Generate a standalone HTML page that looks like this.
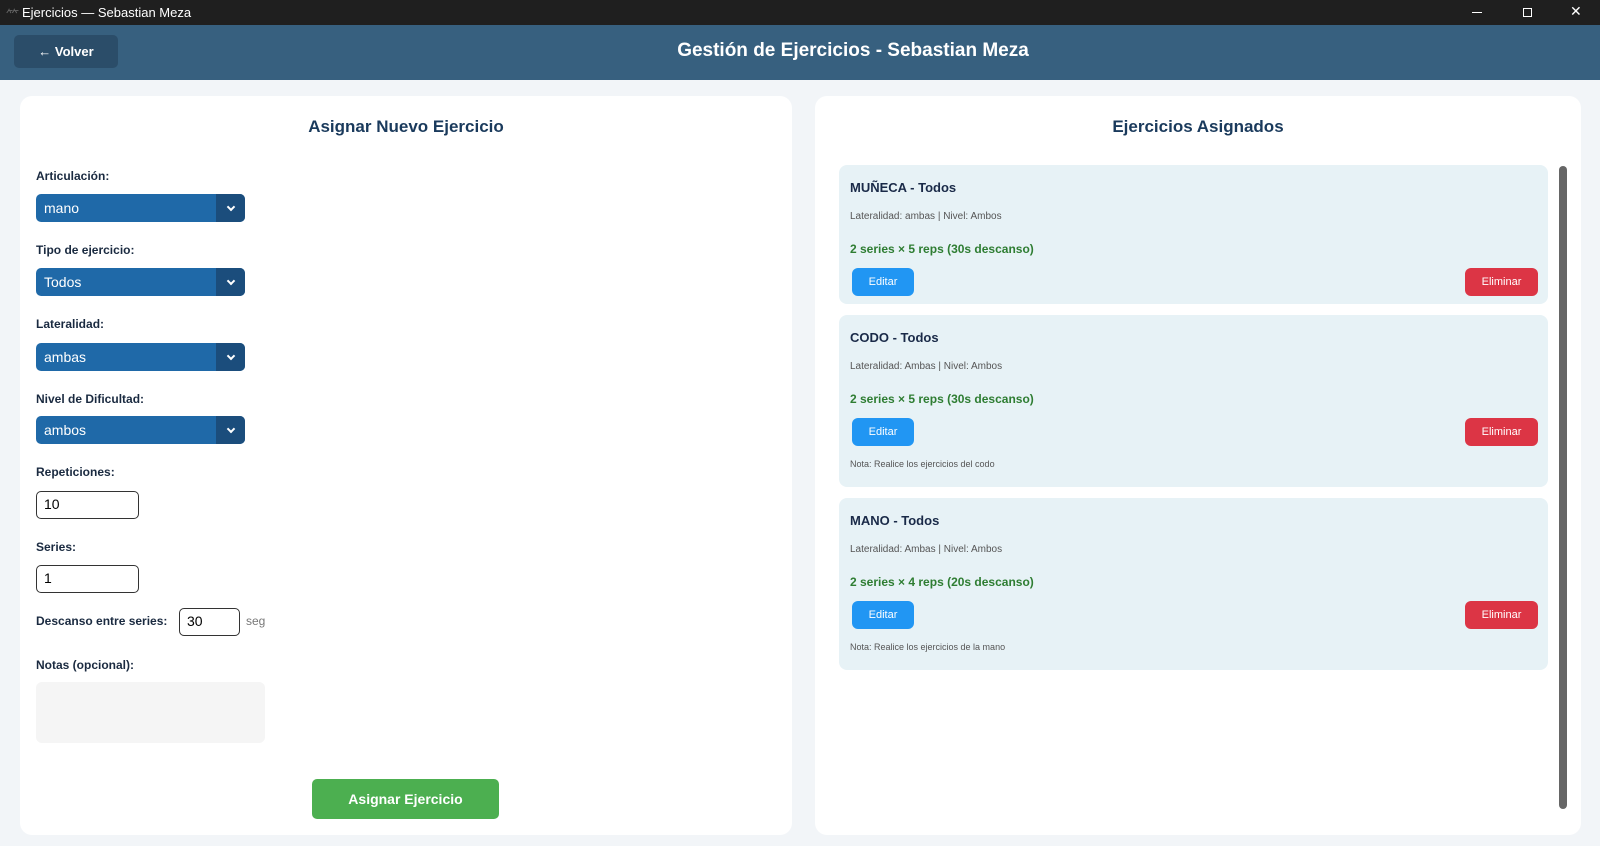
<!DOCTYPE html>
<html><head><meta charset="utf-8"><style>
*{box-sizing:border-box;margin:0;padding:0}
body{width:1600px;height:846px;background:#f2f5f8;font-family:"Liberation Sans",sans-serif;position:relative;overflow:hidden}
.abs{position:absolute}
.tb{left:0;top:0;width:1600px;height:25px;background:#1f1f1f;color:#fff;font-size:13px}
.hd{left:0;top:25px;width:1600px;height:55px;background:#37607f}
.volver{left:14px;top:35px;width:104px;height:33px;background:#2b4d69;border-radius:5px;color:#fff;font-weight:bold;font-size:13px;text-align:center;line-height:33px}
.ht{left:0;width:1706px;top:40px;text-align:center;color:#fff;font-weight:bold;font-size:19px}
.panel{background:#fff;border-radius:12px;top:96px;height:739px}
h2{position:absolute;font-size:17px;color:#1a3a5c;font-weight:bold;text-align:center;top:21px;width:100%}
.lbl{position:absolute;left:16px;font-size:12px;font-weight:bold;color:#1a2a40}
.sel{position:absolute;left:16px;width:209px;height:28px;background:#1f69a8;border-radius:5px;color:#fff;font-size:14px;line-height:28px;padding-left:8px;overflow:hidden}
.sel:after{content:"";position:absolute;right:0;top:0;width:29px;height:28px;background:#1b4d7c}
.sel i{position:absolute;right:11px;top:10px;width:6px;height:6px;border-right:2px solid #fff;border-bottom:2px solid #fff;transform:rotate(45deg);z-index:2}
.inp{position:absolute;border:1.5px solid #333;border-radius:5px;background:#fff;font-size:14px;line-height:25px;padding-left:7px;height:28px}
.card{position:absolute;left:24px;width:709px;background:#e7f2f6;border-radius:8px}
.ct{position:absolute;left:11px;top:15px;font-size:13px;font-weight:bold;color:#1a2a48}
.cl{position:absolute;left:11px;top:46px;font-size:10px;color:#555}
.cg{position:absolute;left:11px;top:77px;font-size:12px;font-weight:bold;color:#2e7d32}
.be{position:absolute;left:13px;top:103px;width:62px;height:28px;background:#2196f3;border-radius:6px;color:#fff;font-size:11px;text-align:center;line-height:28px}
.bx{position:absolute;right:10px;top:103px;width:73px;height:28px;background:#dc3545;border-radius:6px;color:#fff;font-size:11px;text-align:center;line-height:28px}
.cn{position:absolute;left:11px;top:144px;font-size:9px;color:#555}
</style></head><body>
<div class="abs tb"><span style="position:absolute;left:6px;top:5px;color:#666">⺮</span><span style="position:absolute;left:22px;top:5px">Ejercicios — Sebastian Meza</span>
<div style="position:absolute;left:1472px;top:12px;width:10px;height:1px;background:#fff"></div>
<div style="position:absolute;left:1523px;top:8px;width:9px;height:9px;border:1px solid #fff"></div>
<span style="position:absolute;left:1570px;top:3px;font-size:14px">✕</span></div>
<div class="abs hd"></div>
<div class="abs volver">← Volver</div>
<div class="abs ht">Gestión de Ejercicios - Sebastian Meza</div>

<div class="abs panel" style="left:20px;width:772px">
<h2>Asignar Nuevo Ejercicio</h2>
<div class="lbl" style="top:73px">Articulación:</div>
<div class="sel" style="top:98px">mano<i></i></div>
<div class="lbl" style="top:147px">Tipo de ejercicio:</div>
<div class="sel" style="top:172px">Todos<i></i></div>
<div class="lbl" style="top:221px">Lateralidad:</div>
<div class="sel" style="top:247px">ambas<i></i></div>
<div class="lbl" style="top:296px">Nivel de Dificultad:</div>
<div class="sel" style="top:320px">ambos<i></i></div>
<div class="lbl" style="top:369px">Repeticiones:</div>
<div class="inp" style="left:16px;top:395px;width:103px">10</div>
<div class="lbl" style="top:444px">Series:</div>
<div class="inp" style="left:16px;top:469px;width:103px">1</div>
<div class="lbl" style="top:518px">Descanso entre series:</div>
<div class="inp" style="left:159px;top:512px;width:61px">30</div>
<div style="position:absolute;left:226px;top:518px;font-size:12px;color:#777">seg</div>
<div class="lbl" style="top:562px">Notas (opcional):</div>
<div style="position:absolute;left:16px;top:586px;width:229px;height:61px;background:#f5f5f5;border-radius:6px"></div>
<div style="position:absolute;left:292px;top:683px;width:187px;height:40px;background:#4caf50;border-radius:5px;color:#fff;font-weight:bold;font-size:14px;text-align:center;line-height:40px">Asignar Ejercicio</div>
</div>

<div class="abs panel" style="left:815px;width:766px">
<h2>Ejercicios Asignados</h2>
<div class="card" style="top:69px;height:139px">
<div class="ct">MUÑECA - Todos</div><div class="cl">Lateralidad: ambas | Nivel: Ambos</div><div class="cg">2 series × 5 reps (30s descanso)</div><div class="be">Editar</div><div class="bx">Eliminar</div></div>
<div class="card" style="top:219px;height:172px">
<div class="ct">CODO - Todos</div><div class="cl">Lateralidad: Ambas | Nivel: Ambos</div><div class="cg">2 series × 5 reps (30s descanso)</div><div class="be">Editar</div><div class="bx">Eliminar</div><div class="cn">Nota: Realice los ejercicios del codo</div></div>
<div class="card" style="top:402px;height:172px">
<div class="ct">MANO - Todos</div><div class="cl">Lateralidad: Ambas | Nivel: Ambos</div><div class="cg">2 series × 4 reps (20s descanso)</div><div class="be">Editar</div><div class="bx">Eliminar</div><div class="cn">Nota: Realice los ejercicios de la mano</div></div>
<div style="position:absolute;left:744px;top:70px;width:8px;height:643px;background:#666;border-radius:4px"></div>
</div>
</body></html>
